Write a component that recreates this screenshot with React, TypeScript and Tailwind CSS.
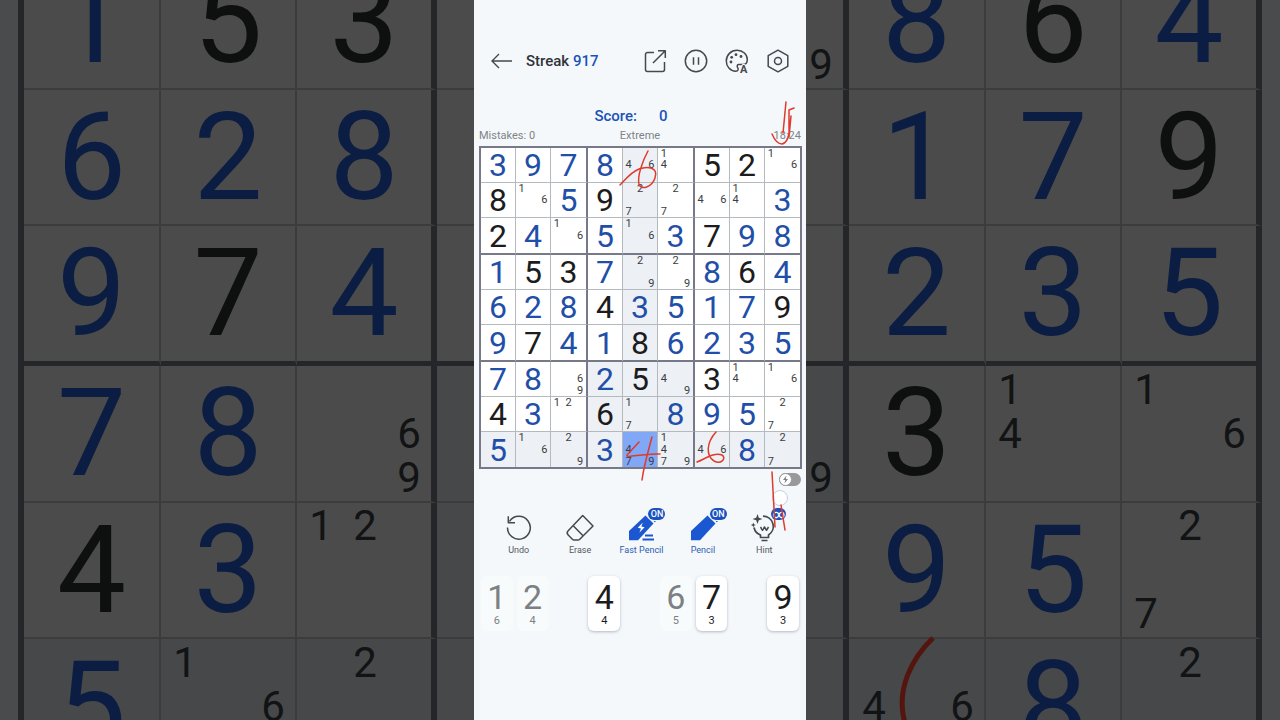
import { useState } from 'react';
import type { ReactNode } from 'react';
import clsx from 'clsx';

// g = given digit, p = digit placed by the player, n = pencil notes
const ROWS = [
  'p3 p9 p7 p8 n46 n14 g5 g2 n16',
  'g8 n16 p5 g9 n27 n27 n46 n14 p3',
  'g2 p4 n16 p5 n16 p3 g7 p9 p8',
  'p1 g5 g3 p7 n29 n29 p8 g6 p4',
  'p6 p2 p8 g4 p3 p5 p1 p7 g9',
  'p9 g7 p4 p1 g8 p6 p2 p3 p5',
  'p7 p8 n69 p2 g5 n49 g3 n14 n16',
  'g4 p3 n12 g6 n17 p8 p9 p5 n27',
  'p5 n16 n29 p3 n479 n1479 n46 p8 n27',
].map((row) => row.split(' '));

const LEFT_ROWS = ROWS.slice(3).map((row) => [...row.slice(0, 3), 'n']);
const RIGHT_ROWS = ROWS.slice(3).map((row) => [row[5].startsWith('n') ? 'n9' : 'n', ...row.slice(6)]);

const KEYS = [
  { digit: 1, left: 6, active: false },
  { digit: 2, left: 4, active: false },
  { digit: 3, left: 0, active: false },
  { digit: 4, left: 4, active: true },
  { digit: 5, left: 0, active: false },
  { digit: 6, left: 5, active: false },
  { digit: 7, left: 3, active: true },
  { digit: 8, left: 0, active: false },
  { digit: 9, left: 3, active: true },
];

function Notes({ digits }: { digits: string }) {
  return (
    <span className="grid size-full grid-cols-3 grid-rows-3 text-[11px] leading-none text-[#3a3d42]">
      {'123456789'.split('').map((d) => (
        <span key={d} className="flex items-center justify-center">
          {digits.includes(d) ? d : ''}
        </span>
      ))}
    </span>
  );
}

function Board() {
  const [selected, setSelected] = useState({ row: 8, col: 4 });

  return (
    <div className="mr-[4px] ml-[5px] grid aspect-square grid-cols-[35fr_35fr_37fr_35fr_35fr_37fr_35fr_35fr_35fr] grid-rows-[35fr_35fr_37fr_35fr_35fr_37fr_35fr_35fr_35fr] border-2 border-[#777988] bg-white">
      {ROWS.map((row, r) =>
        row.map((cell, c) => {
          const isSelected = selected.row === r && selected.col === c;
          const sameBox =
            Math.floor(selected.row / 3) === Math.floor(r / 3) && Math.floor(selected.col / 3) === Math.floor(c / 3);
          const related = selected.row === r || selected.col === c || sameBox;
          return (
            <button
              key={`${r}-${c}`}
              onClick={() => setSelected({ row: r, col: c })}
              className={clsx(
                'flex min-h-0 min-w-0 items-center justify-center',
                c === 8 ? 'border-r-0' : c % 3 === 2 ? 'border-r-2 border-r-[#777988]' : 'border-r border-r-[#b4b9bd]',
                r === 8 ? 'border-b-0' : r % 3 === 2 ? 'border-b-2 border-b-[#777988]' : 'border-b border-b-[#b4b9bd]',
                isSelected ? 'bg-[#80a8f6]' : related ? 'bg-[#edf1f5]' : 'bg-white',
              )}
            >
              {cell[0] === 'n' ? (
                <Notes digits={cell.slice(1)} />
              ) : (
                <span className={clsx('text-[32px] leading-none', cell[0] === 'g' ? 'text-[#1c1c1e]' : 'text-[#1f4fa8]')}>
                  {cell[1]}
                </span>
              )}
            </button>
          );
        }),
      )}
    </div>
  );
}

// Dimmed close-up of the board on each side of the phone
function SideBoard({ rows, side }: { rows: string[][]; side: 'left' | 'right' }) {
  const isLeft = side === 'left';
  return (
    <div
      aria-hidden="true"
      className={clsx(
        'flex min-w-0 flex-1 items-center overflow-hidden bg-[#494b4d] pt-[9px]',
        isLeft ? 'justify-end' : 'justify-start',
      )}
    >
      <div
        className={clsx(
          'grid shrink-0 grid-rows-[137px_136px_140px_137px_136px_137px]',
          isLeft
            ? 'grid-cols-[137px_136px_140px_37px] border-l-6 border-[#24262a]'
            : 'grid-cols-[43px_137px_136px_140px]',
        )}
      >
        {rows.map((row, r) =>
          row.map((cell, c) => {
            const thick = isLeft ? c === 2 : c === 0 || c === 3;
            const shaded = r === 5 || (r > 2 && (isLeft ? c === 3 : c === 0));
            return (
              <div
                key={`${r}-${c}`}
                className={clsx(
                  'relative flex min-w-0 items-center',
                  cell[0] === 'n' ? 'justify-end' : 'justify-center',
                  thick ? 'border-r-6 border-r-[#24262a]' : isLeft && c === 3 ? '' : 'border-r-2 border-r-[#3a3c3e]',
                  r === 2 ? 'border-b-5 border-b-[#24262a]' : 'border-b-2 border-b-[#3a3c3e]',
                  shaded ? 'bg-[#46484a]' : 'bg-[#4b4b4b]',
                )}
              >
                {cell[0] === 'n' && cell.length > 1 && (
                  <div className="grid h-[132px] w-[132px] shrink-0 grid-cols-3 grid-rows-3 text-[42px] leading-none text-[#121314]">
                    {'123456789'.split('').map((d) => (
                      <span key={d} className="flex items-center justify-center">
                        {cell.includes(d) ? d : ''}
                      </span>
                    ))}
                  </div>
                )}
                {cell[0] !== 'n' && (
                  <span className={clsx('text-[123px] leading-none', cell[0] === 'g' ? 'text-[#0e0f0f]' : 'text-[#0b1d42]')}>
                    {cell[1]}
                  </span>
                )}
                {!isLeft && r === 5 && c === 1 && (
                  <svg className="absolute inset-0 size-full overflow-visible" fill="none" stroke="#55150f" strokeWidth="5">
                    <path d="M84 -1C64 18 46 50 56 84" />
                  </svg>
                )}
              </div>
            );
          }),
        )}
      </div>
    </div>
  );
}

function HeaderIcon({ label, children }: { label: string; children: ReactNode }) {
  return (
    <button aria-label={label} className="size-6">
      <svg viewBox="0 0 24 24" className="size-6" fill="none" stroke="#45484c" strokeWidth="1.5" strokeLinejoin="round">
        {children}
      </svg>
    </button>
  );
}

function Header() {
  return (
    <header className="flex items-center pr-4 pl-4">
      <button aria-label="Back" className="size-6">
        <svg viewBox="0 0 24 24" className="size-6" fill="none" stroke="#45484c" strokeWidth="1.4">
          <path d="M22 12H2M9 5L2 12l7 7" />
        </svg>
      </button>
      <h1 className="ml-3 flex-1 text-[15px] leading-5 font-medium text-[#303338]">
        Streak <span className="text-[#1c52b8]">917</span>
      </h1>
      <div className="flex gap-[17px]">
        <HeaderIcon label="Share">
          <path d="M11 3.500H4.500a2 2 0 0 0-2 2V20.500a2 2 0 0 0 2 2H19.500a2 2 0 0 0 2-2V13M10 14L22 2M15 1.700h7.300V9" />
        </HeaderIcon>
        <HeaderIcon label="Pause">
          <circle cx="12" cy="12" r="10.700" />
          <path d="M9.500 8.300v7.400M14.500 8.300v7.400" />
        </HeaderIcon>
        <HeaderIcon label="Theme">
          <path d="M13.500 15.500c-1.600.3-1.600 2-.8 3.200.9 1.500.6 3.600-1.900 3.600C5 22 1.300 17.500 1.300 12 1.300 6 6 1.300 12 1.300c6 0 10.300 4.200 10.300 9.200 0 3-1.500 5-4 5z" />
          <g fill="#45484c" stroke="none">
            <circle cx="6" cy="13" r="1.400" />
            <circle cx="6.700" cy="8.300" r="1.400" />
            <circle cx="11" cy="5.700" r="1.400" />
            <circle cx="16" cy="7.500" r="1.400" />
          </g>
          <text x="15" y="23.500" fontSize="11" fontWeight="700" fill="#45484c" stroke="#f4f8fb" strokeWidth="2" paintOrder="stroke">
            A
          </text>
        </HeaderIcon>
        <HeaderIcon label="Settings">
          <path d="M12 1.200L21.800 6.700V17.300L12 22.800 2.200 17.300V6.700z" />
          <circle cx="12" cy="12" r="3.500" />
        </HeaderIcon>
      </div>
    </header>
  );
}

type ToolProps = { label: string; badge?: string; active?: boolean; children: ReactNode };

function Tool({ label, badge, active, children }: ToolProps) {
  return (
    <button className={clsx('flex flex-col items-center', active ? 'text-[#1b57d0]' : 'text-[#45484c]')}>
      <span className="relative size-7">
        <svg
          viewBox="0 0 28 28"
          className="size-7 overflow-visible"
          fill="none"
          stroke="currentColor"
          strokeWidth="1.500"
          strokeLinejoin="round"
        >
          {children}
        </svg>
        {badge && (
          <span
            className={clsx(
              'absolute -top-[6px] flex h-3 items-center justify-center rounded-full bg-[#1b52c0] leading-none font-medium text-white ring-1 ring-[#f4f8fb]',
              active ? 'left-[21px] w-[17px] text-[9px]' : 'left-[21px] w-[15px] text-[12px]',
            )}
          >
            {badge}
          </span>
        )}
      </span>
      <span className={clsx('mt-[3px] text-[9px] leading-[10px] whitespace-nowrap', active ? 'text-[#2c5cb0]' : 'text-[#54585d]')}>
        {label}
      </span>
    </button>
  );
}

function PencilShape() {
  return (
    <g fill="currentColor" stroke="none">
      <path d="M2 17L18.500 1.500l8 8L11 26.300H2z" />
      <path d="M19.800 .3L22.500-2.500l8 8-2.700 2.800z" />
    </g>
  );
}

function Toolbar() {
  return (
    <div className="mt-[28px] grid grid-cols-5 pr-[11px] pl-[14px]">
      <Tool label="Undo">
        <path d="M2.500 13.500a11.400 11.400 0 1 0 2-6.200M3.300 2.300V8.700H10" />
      </Tool>
      <Tool label="Erase">
        <path d="M16.700 1.500L27 12 13.500 25.500a2 2 0 0 1-1.400.5H8a2 2 0 0 1-1.400-.6L2.200 21a3 3 0 0 1 0-4.200zM7 11.500L17.500 22.200" />
      </Tool>
      <Tool label="Fast Pencil" badge="ON" active>
        <PencilShape />
        <path d="M15.800 8.500l-5 5.200 3.200.9-1.700 4.200 5.300-5.500-3.300-.8z" fill="#fff" stroke="none" />
        <path d="M18 21.500h8M15.500 25.500H27" strokeWidth="2" />
      </Tool>
      <Tool label="Pencil" badge="ON" active>
        <PencilShape />
      </Tool>
      <Tool label="Hint" badge="∞">
        <path d="M13 2.200A10.200 10.200 0 0 1 18.500 21v2.500h-8V21A10.200 10.200 0 0 1 4 13.500M11.500 26.500h6" strokeWidth="1.700" />
        <path d="M10.500 13l2 3.300 2-3.300 2 3.300 2-3.300" />
        <path d="M7.500 0l1.300 3.700L12.500 5 8.800 6.300 7.500 10 6.200 6.300 2.500 5l3.700-1.300zM3.300 8.500l.7 1.800 1.800.7-1.800.7-.7 1.800-.7-1.800L.8 11l1.800-.7z" fill="currentColor" stroke="none" />
      </Tool>
    </div>
  );
}

function Keypad() {
  return (
    <div className="mx-[5px] mt-[21px] grid grid-cols-9">
      {KEYS.map(({ digit, left, active }) =>
        left > 0 ? (
          <button
            key={digit}
            className={clsx(
              'mx-[2px] flex h-[55px] flex-col items-center rounded-md pt-[3px]',
              active ? 'bg-white text-[#1c1c1e] shadow-[0_1px_3px_rgba(60,70,90,0.35)]' : 'bg-[#f8fbfc] text-[#7d8083]',
            )}
          >
            <span className="text-[34px] leading-[36px]">{digit}</span>
            <span className="text-[11px] leading-[12px]">{left}</span>
          </button>
        ) : (
          <span key={digit} />
        ),
      )}
    </div>
  );
}

// Freehand pen marks drawn on top of the game
function PenMarks() {
  return (
    <svg
      viewBox="0 0 332 720"
      className="pointer-events-none absolute top-0 left-0 w-full"
      fill="none"
      stroke="#df3a2c"
      strokeWidth="1.500"
      strokeLinecap="round"
      strokeLinejoin="round"
    >
      <path d="M312 102C311 113 310 123 309 133M298 134C301 141 305 144 308 144C313 143 316 135 315 127L315 110L320 108M317 116L315 137" />
      <path d="M174 151C169 160 163 176 165 184C167 191 178 187 181 178C185 167 173 166 165 169C157 172 151 180 146 185" />
      <path d="M165 442L153 455C152 459 168 453 186 454M178 437C174 452 170 465 168 480" />
      <path d="M242 432C232 443 232 456 240 461C247 465 253 458 248 455C240 452 231 459 223 462" />
      <circle cx="306" cy="498" r="7.500" fill="#fff" stroke="#c5cfe8" strokeWidth="1" />
      <path d="M298 472L301 527M307 505L311 530" />
    </svg>
  );
}

export default function App() {
  const [fast, setFast] = useState(false);

  return (
    <div className="flex h-screen overflow-hidden font-['Roboto',sans-serif]">
      <SideBoard rows={LEFT_ROWS} side="left" />
      <main className="relative w-full max-w-[332px] overflow-hidden bg-[#f4f8fb] pt-[49px]">
        <Header />
        <div className="mt-[33px] flex justify-center gap-[22px] text-[15px] leading-5 font-medium text-[#1c52b8]">
          <span>Score:</span>
          <span className="mr-[18px]">0</span>
        </div>
        <div className="mx-[5px] mb-[4px] grid grid-cols-3 pt-[3px] text-[11px] leading-[13px] text-[#7f8387]">
          <span>Mistakes: 0</span>
          <span className="text-center">Extreme</span>
          <span className="text-right">18:24</span>
        </div>
        <Board />
        <label className="mt-[4px] mr-[5px] ml-auto flex h-[13px] w-[22px] rounded-full bg-[#97999b]">
          <input
            type="checkbox"
            aria-label="Fast mode"
            className="sr-only"
            checked={fast}
            onChange={(e) => setFast(e.target.checked)}
          />
          <svg viewBox="0 0 13 13" className="size-[13px]">
            <circle cx="6.500" cy="6.500" r="6" fill="#fff" stroke="#97999b" />
            <path d="M7.500 2.500L4 7h2.200L5.500 10.500 9 6H6.800z" fill="#7f8285" />
          </svg>
        </label>
        <Toolbar />
        <Keypad />
        <PenMarks />
      </main>
      <SideBoard rows={RIGHT_ROWS} side="right" />
    </div>
  );
}
